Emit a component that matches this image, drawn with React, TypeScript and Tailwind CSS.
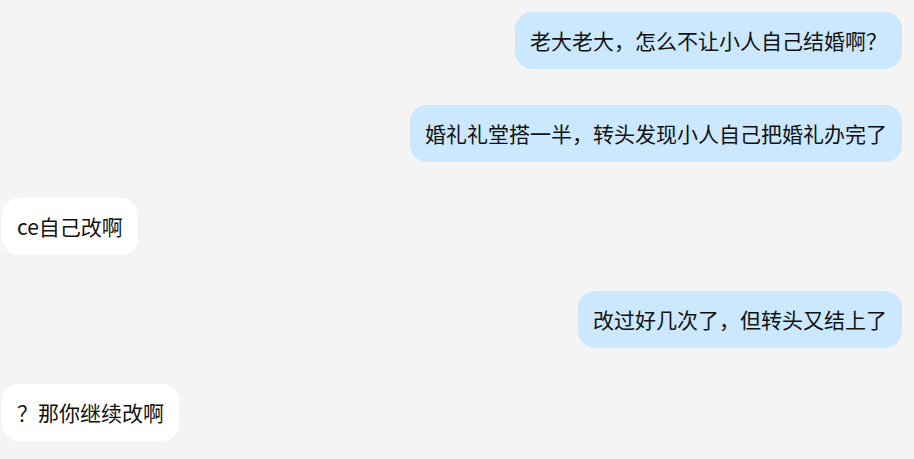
type Message = {
  id: number;
  fromMe: boolean;
  text: string;
};

const messages: Message[] = [
  { id: 1, fromMe: true, text: "老大老大，怎么不让小人自己结婚啊？" },
  { id: 2, fromMe: true, text: "婚礼礼堂搭一半，转头发现小人自己把婚礼办完了" },
  { id: 3, fromMe: false, text: "ce自己改啊" },
  { id: 4, fromMe: true, text: "改过好几次了，但转头又结上了" },
  { id: 5, fromMe: false, text: "？那你继续改啊" },
];

function Bubble({ message }: { message: Message }) {
  return (
    <div className={message.fromMe ? "flex justify-end" : "flex justify-start"}>
      <div
        className={
          "rounded-[17px] px-[15px] py-[15px] text-[21px] leading-[27px] text-[#111] whitespace-nowrap " +
          (message.fromMe ? "bg-[#cce8ff]" : "bg-white")
        }
      >
        {message.text}
      </div>
    </div>
  );
}

export default function App() {
  return (
    <div
      className="min-h-screen bg-[#f4f4f4] pt-[12px] pl-[2px] pr-[12px] pb-[18px] flex flex-col gap-[36px]"
      style={{ fontFamily: '"Noto Sans CJK SC", "Noto Sans", sans-serif' }}
    >
      {messages.map((m) => (
        <Bubble key={m.id} message={m} />
      ))}
    </div>
  );
}
